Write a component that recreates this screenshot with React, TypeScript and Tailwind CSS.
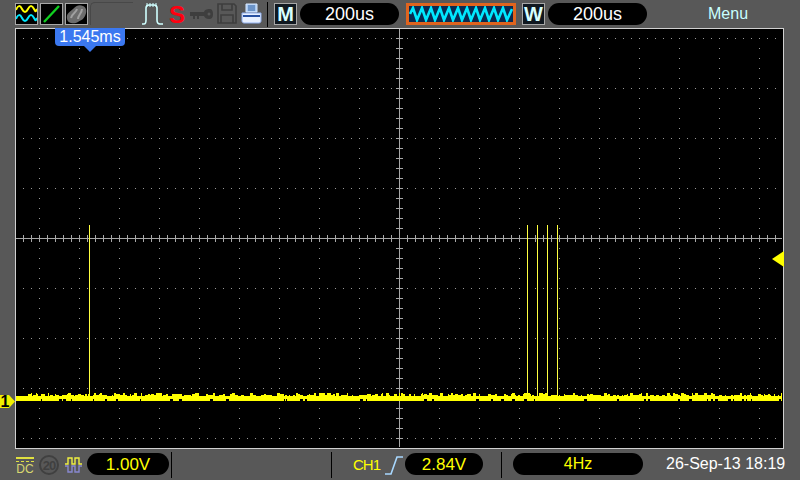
const font = { fontFamily: '"Liberation Sans", Arial, sans-serif' };

// fixed noise so the yellow trace looks the same on every load
function buildNoise() {
  let seed = 20130926;
  const rand = () => {
    seed = (seed * 1664525 + 1013904223) % 4294967296;
    return seed / 4294967296;
  };
  let d = '';
  let x = 16;
  while (x < 782) {
    const w = Math.min(1 + Math.floor(rand() * 3), 782 - x);
    const up = rand();
    const down = rand();
    const top = up > 0.85 ? 393 : up > 0.65 ? 394 : up > 0.35 ? 395 : 396;
    const bottom = down > 0.86 ? 399 : 401;
    d += `M${x} ${top}h${w}V${bottom}h-${w}z`;
    x += w;
  }
  return d;
}

const noise = buildNoise();

function buildGrid() {
  const dots: string[] = [];
  for (let y = 38; y <= 438; y += 50) {
    for (let x = 23; x <= 775; x += 8) dots.push(`M${x} ${y}h1v1h-1z`);
  }
  for (let x = 39; x <= 759; x += 40) {
    for (let y = 48; y <= 428; y += 10) dots.push(`M${x} ${y}h1v1h-1z`);
  }
  return dots.join('');
}

function buildTicks() {
  let d = 'M16 238.5H782M399.5 29V447';
  for (let x = 23; x <= 775; x += 8) d += `M${x + 0.5} 235V242`;
  for (let y = 38; y <= 438; y += 10) d += `M396 ${y + 0.5}H403`;
  return d;
}

function Plot() {
  return (
    <svg width="767" height="419" viewBox="16 29 767 419" shapeRendering="crispEdges" className="block">
      <path d={buildGrid()} fill="#989898" />
      <path d={buildTicks()} stroke="#a8a8a8" strokeWidth="1" fill="none" />
      <path d="M89.5 225V396M527.5 225V396M537.5 225V396M547.5 225V396M557.5 225V396" stroke="#ffff40" strokeWidth="1" />
      <path d={noise} fill="#ffff00" />
    </svg>
  );
}

function IconBox({ children }: { children: React.ReactNode }) {
  return (
    <div className="h-[22px] w-[23px] border border-[#a8a8a8] bg-black flex items-center justify-center overflow-hidden">
      {children}
    </div>
  );
}

function LetterBox({ letter }: { letter: string }) {
  return (
    <div className="h-[22px] w-[23px] border border-[#a8a8a8] bg-[#101820] flex items-center justify-center text-[20px] font-bold leading-none text-[#d8ffff]">
      {letter}
    </div>
  );
}

function Pill({ className, text, color }: { className: string; text: string; color: string }) {
  return (
    <div className={`bg-black rounded-[11px] flex items-center justify-center leading-none ${color} ${className}`}>
      {text}
    </div>
  );
}

function Divider({ className, color = 'bg-black' }: { className: string; color?: string }) {
  return <div className={`w-px ${color} ${className}`} />;
}

function TopBar() {
  return (
    <div className="h-[28px] pl-[15px] flex items-start pt-[3px] relative">
      <IconBox>
        <svg width="21" height="20" viewBox="0 0 21 20" fill="none" strokeWidth="2">
          <path d="M0 6C2 1 4 1 6 5S10 9 12 5 16 1 18 5 20 7 21 5" stroke="#ffff00" />
          <path d="M0 15C2 10 4 10 6 14S10 18 12 14 16 10 18 14 20 16 21 14" stroke="#00e8ff" />
        </svg>
      </IconBox>
      <div className="ml-[2px]">
        <IconBox>
          <svg width="21" height="20" viewBox="0 0 21 20" fill="none">
            <path d="M3 18L18 2" stroke="#10d020" strokeWidth="2.4" />
          </svg>
        </IconBox>
      </div>
      <div className="ml-[2px]">
        <IconBox>
          <svg width="21" height="20" viewBox="0 0 21 20">
            <path d="M1 15C0 9 4 8 7 5S13 0 17 2 21 8 19 12 15 16 12 18 2 20 1 15Z" fill="#6c6c6c" />
            <path d="M5 14C6 9 10 9 11 5M12 15C12 11 16 9 16 5" stroke="#a0a0a0" strokeWidth="2" fill="none" />
          </svg>
        </IconBox>
      </div>
      <div className="ml-[2px] w-[43px] h-[23px] -mt-px border-l border-t border-[#484848] rounded-tl-[5px]" />
      <svg className="ml-[8px]" width="22" height="22" viewBox="0 0 22 22" fill="none" stroke="#d0ffff" strokeWidth="1.6">
        <path d="M1 21H3C5 21 5 19 5 17V5C5 3 6 2 8 2H13C15 2 16 3 16 5V17C16 19 17 21 19 21H22" />
        <path d="M6 0V4M9 0V4M12 0V4M15 0V4" strokeWidth="1" />
      </svg>
      <div className="ml-[8px] w-[12px] h-[17px] mt-[3px] flex items-center justify-center text-[24px] font-bold leading-none text-[#ff0010]">S</div>
      <svg className="ml-[7px] mt-[6px]" width="23" height="10" viewBox="0 0 23 10" fill="#3e3e3e">
        <path d="M0 3H14C15 0 18 0 20 0S23 2 23 5 22 10 19 10 15 9 14 7H9V10H7V7H5V10H3V7H0Z" />
        <circle cx="19" cy="5" r="1.5" fill="#585858" />
      </svg>
      <svg className="ml-[4px]" width="20" height="21" viewBox="0 0 20 21" fill="none" stroke="#3e3e3e" strokeWidth="1.6">
        <path d="M1 1H17L19 3V20H1Z" />
        <path d="M5 1V7H15V1M4 20V12H16V20" />
      </svg>
      <svg className="ml-[4px]" width="21" height="21" viewBox="0 0 21 21" fill="none">
        <path d="M5 1H16V9H5Z" fill="#a8c8f0" stroke="#d8e8ff" />
        <path d="M7 3H14M7 5H14M7 7H14" stroke="#3060a0" />
        <path d="M1 10H20V18C20 19 19 20 18 20H3C2 20 1 19 1 18Z" fill="#e8f0ff" stroke="#90b0f0" />
        <path d="M2 13H19" stroke="#2850a0" strokeWidth="2" />
      </svg>
      <Divider className="ml-[5px] h-[25px] -mt-px" />
      <div className="ml-[6px]">
        <LetterBox letter="M" />
      </div>
      <Pill className="ml-[3px] w-[99px] h-[22px] text-[18px]" text="200us" color="text-white" />
      <div className="ml-[7px] w-[110px] h-[22px] border-[3px] border-[#e0641e] bg-[#0a2a50] overflow-hidden">
        <svg width="104" height="16" viewBox="0 0 104 16" fill="none">
          <path d="M1 8L4 2 8 14 13 2 17 14 22 2 26 14 31 2 35 14 40 2 44 14 49 2 53 14 58 2 62 14 67 2 71 14 76 2 80 14 85 2 89 14 94 2 98 14 103 3" stroke="#00e8ff" strokeWidth="2.6" />
        </svg>
      </div>
      <div className="ml-[6px]">
        <LetterBox letter="W" />
      </div>
      <Pill className="ml-[3px] w-[99px] h-[22px] text-[18px]" text="200us" color="text-white" />
      <div className="flex-1 pl-[61px] h-[22px] flex items-center text-[16px] leading-none text-[#c8ffff]">Menu</div>
    </div>
  );
}

function BottomBar() {
  return (
    <div className="flex-1 pl-[16px] flex items-start pt-[4px]">
      <div className="w-[18px] h-[22px] flex flex-col items-center">
        <div className="w-[18px] h-[2px] mt-[4px] bg-[#e0e040]" />
        <div className="w-[18px] h-0 mt-[2px] border-t border-dashed border-[#e0e040]" />
        <div className="text-[12px] leading-none mt-[1px] text-[#d8d870]">DC</div>
      </div>
      <div className="ml-[5px] w-[20px] h-[20px] mt-[2px] rounded-full border-[2px] border-[#404040] flex items-center justify-center text-[13px] font-bold leading-none tracking-[-1px] text-[#404040]">20</div>
      <svg className="ml-[6px] mt-[4px]" width="17" height="16" viewBox="0 0 17 16" fill="none" strokeWidth="1.4">
        <path d="M0 7H3V1H7V7H10V1H14V7H17" stroke="#f0f040" />
        <path d="M0 9H3V15H7V9H10V15H14V9H17" stroke="#8888d0" />
      </svg>
      <Pill className="ml-[5px] w-[82px] h-[22px] text-[17px]" text="1.00V" color="text-[#ffff00]" />
      <Divider className="ml-[2px] h-[26px] -mt-px" />
      <Divider className="ml-[159px] h-[26px] -mt-px" />
      <div className="ml-[21px] w-[26px] h-[22px] flex items-center text-[15px] leading-none tracking-[-1px] whitespace-nowrap text-[#ffff00]">CH1</div>
      <svg className="ml-[6px] mt-[2px]" width="18" height="20" viewBox="0 0 18 20" fill="none" stroke="#a8d8ff" strokeWidth="1.6">
        <path d="M0 19H6L12 2H18" />
      </svg>
      <Pill className="ml-[2px] w-[78px] h-[22px] text-[17px]" text="2.84V" color="text-[#ffff00]" />
      <Divider className="ml-[18px] h-[26px] -mt-px" />
      <Pill className="ml-[11px] w-[130px] h-[22px] text-[16px]" text="4Hz" color="text-[#ffff00]" />
      <div className="ml-[23px] h-[22px] flex items-center text-[16px] leading-none whitespace-nowrap text-white">26-Sep-13 18:19</div>
    </div>
  );
}

export default function App() {
  return (
    <div className="w-[800px] h-[480px] bg-[#585858] flex flex-col overflow-hidden relative" style={font}>
      <TopBar />
      <div className="ml-[15px] w-[769px] h-[421px] border border-[#d0d0d0] bg-black relative shrink-0">
        <Plot />
        {/* cursor readout */}
        <div className="absolute left-[39px] -top-px w-[70px] h-[18px] bg-[#3b78f0] rounded-b-[4px] flex items-center justify-center text-[16px] leading-none text-white">
          1.545ms
        </div>
        <div className="absolute left-[68px] top-[17px] w-0 h-0 border-l-[6px] border-r-[6px] border-t-[6px] border-l-transparent border-r-transparent border-t-[#3b78f0]" />
        {/* trigger level */}
        <div className="absolute right-[-1px] top-[222px] w-0 h-0 border-t-[8px] border-b-[8px] border-r-[12px] border-t-transparent border-b-transparent border-r-[#ffff00]" />
      </div>
      <BottomBar />
      {/* channel 1 ground marker */}
      <svg className="absolute left-0 top-[394px]" width="16" height="15" viewBox="0 0 16 15">
        <path d="M0 1H9L15 7.5 9 14H0Z" fill="#f0f000" />
      </svg>
      <div className="absolute left-0 top-[394px] w-[10px] h-[15px] flex items-center justify-center text-[16px] font-bold leading-none text-black">1</div>
    </div>
  );
}
